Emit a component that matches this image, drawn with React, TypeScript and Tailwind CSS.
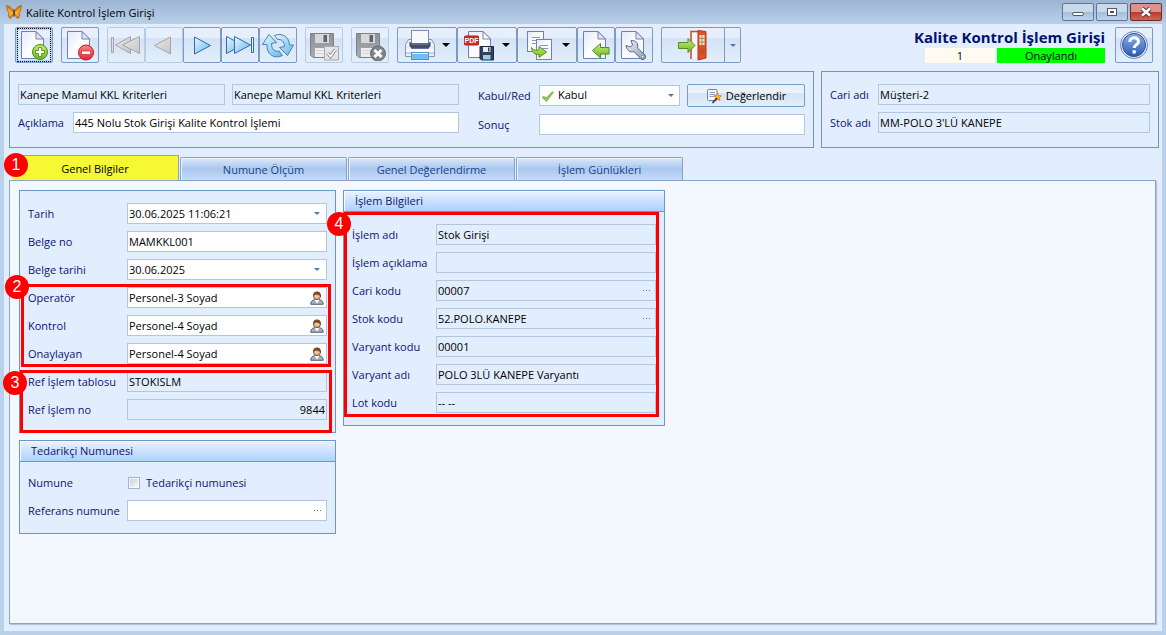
import type { ReactNode } from "react";

/* Toolbar drawings */

function PageShape() {
  return (
    <>
      <path d="M3.500 2.500H18L25.500 10V29.500H3.500Z" fill="url(#paper)" stroke="#7080b4" />
      <path d="M18 2.500V10H25.500Z" fill="#dfe6f8" stroke="#7080b4" />
    </>
  );
}

function Defs() {
  return (
    <svg width="0" height="0" className="absolute">
      <defs>
        <linearGradient id="paper" x1="0" y1="0" x2="1" y2="1">
          <stop offset="0" stopColor="#e3e9f8" />
          <stop offset="0.5" stopColor="#fdfdff" />
          <stop offset="1" stopColor="#eef1fb" />
        </linearGradient>
        <linearGradient id="green" x1="0" y1="0" x2="0" y2="1">
          <stop offset="0" stopColor="#c6ef6d" />
          <stop offset="1" stopColor="#6fb524" />
        </linearGradient>
        <linearGradient id="red" x1="0" y1="0" x2="0" y2="1">
          <stop offset="0" stopColor="#ff8585" />
          <stop offset="1" stopColor="#e8262d" />
        </linearGradient>
        <linearGradient id="blue" x1="0" y1="0" x2="1" y2="1">
          <stop offset="0" stopColor="#e8f8ff" />
          <stop offset="1" stopColor="#66b6ea" />
        </linearGradient>
        <linearGradient id="gray" x1="0" y1="0" x2="1" y2="1">
          <stop offset="0" stopColor="#ececec" />
          <stop offset="1" stopColor="#c4c4c4" />
        </linearGradient>
        <linearGradient id="floppy" x1="0" y1="0" x2="0" y2="1">
          <stop offset="0" stopColor="#8f9196" />
          <stop offset="1" stopColor="#a9abb0" />
        </linearGradient>
        <linearGradient id="help" x1="0" y1="0" x2="0" y2="1">
          <stop offset="0" stopColor="#8fb0ea" />
          <stop offset="1" stopColor="#2a5cb4" />
        </linearGradient>
        <linearGradient id="steel" x1="0" y1="0" x2="1" y2="1">
          <stop offset="0" stopColor="#eef1f7" />
          <stop offset="1" stopColor="#8f9ab0" />
        </linearGradient>
        <linearGradient id="wing" x1="0" y1="0" x2="0" y2="1">
          <stop offset="0" stopColor="#f08c10" />
          <stop offset="0.6" stopColor="#ffb52a" />
          <stop offset="1" stopColor="#d9730c" />
        </linearGradient>
      </defs>
    </svg>
  );
}

function Icon({ children }: { children: ReactNode }) {
  return (
    <svg viewBox="0 0 32 32" className="size-8 shrink-0" aria-hidden="true">
      {children}
    </svg>
  );
}

const NewIcon = () => (
  <Icon>
    <PageShape />
    <circle cx="22" cy="23" r="7.500" fill="url(#green)" stroke="#4a8a12" />
    <path d="M20.500 18.500h3v3h3v3h-3v3h-3v-3h-3v-3h3z" fill="#fff" stroke="#4a8a12" strokeWidth="0.800" />
  </Icon>
);

const DeleteIcon = () => (
  <Icon>
    <PageShape />
    <circle cx="22" cy="23.500" r="7.500" fill="url(#red)" stroke="#c4161c" />
    <rect x="17.500" y="22" width="9" height="3.500" fill="#fff" stroke="#b3161c" strokeWidth="0.600" />
  </Icon>
);

const FirstIcon = () => (
  <Icon>
    <path d="M1.500 8.500h2v15h-2z" fill="#ddd" stroke="#a3a5aa" />
    <path d="M20.500 7.500v17L5.500 16z" fill="url(#gray)" stroke="#a3a5aa" />
    <path d="M29.500 7.500v17L12.500 16z" fill="url(#gray)" stroke="#a3a5aa" />
  </Icon>
);

const PrevIcon = () => (
  <Icon>
    <path d="M22.500 8v17L6.500 16.500z" fill="url(#gray)" stroke="#a3a5aa" />
  </Icon>
);

const NextIcon = () => (
  <Icon>
    <path d="M8.500 8v17l16-8.500z" fill="url(#blue)" stroke="#2f68b3" />
  </Icon>
);

const LastIcon = () => (
  <Icon>
    <path d="M2.500 7.500v17l16-8.500z" fill="url(#blue)" stroke="#2f68b3" />
    <path d="M10.500 7.500v17l16-8.500z" fill="url(#blue)" stroke="#2f68b3" />
    <path d="M27.500 8.500h2v15h-2z" fill="#e8f8ff" stroke="#2f68b3" />
  </Icon>
);

const RefreshIcon = () => (
  <Icon>
    <path
      d="M12.500 6.500C20 3.500 27 7.500 27.500 16H31.500L25.500 26.500L17.500 18.500L22.500 17.500C22.500 12.500 19.500 10 15.500 10.500Z"
      fill="url(#blue)"
      stroke="#4383b5"
    />
    <path
      d="M20.500 26.500C12 30.500 4.500 25.500 5 15.500H0.500L7 5.500L14.500 13.500L9.500 14.500C9.500 20.500 13 23 17 22Z"
      fill="url(#blue)"
      stroke="#4383b5"
    />
  </Icon>
);

function GrayFloppy() {
  return (
    <>
      <path d="M2.500 4.500H25.500V28.500H5L2.500 26Z" fill="url(#floppy)" stroke="#7d8085" />
      <rect x="7" y="5" width="14" height="9" fill="#d5d7da" />
      <rect x="15.500" y="6" width="3.500" height="7" fill="#5f6267" />
      <rect x="7" y="19" width="14" height="9" fill="#eceded" />
      <path d="M8 21.500h12M8 24.500h12" stroke="#d4d6d8" />
    </>
  );
}

const SaveIcon = () => (
  <Icon>
    <GrayFloppy />
    <rect x="16.500" y="17.500" width="14" height="13.500" fill="#e4e4e5" stroke="#a8aaad" />
    <path d="M19.500 24l3 3.500 5-7" fill="none" stroke="#8d9095" strokeWidth="3.400" />
    <path d="M19.500 24l3 3.500 5-7" fill="none" stroke="#fff" strokeWidth="1.400" />
  </Icon>
);

const SaveCancelIcon = () => (
  <Icon>
    <GrayFloppy />
    <circle cx="24" cy="24.500" r="7.500" fill="#808388" stroke="#66696e" />
    <path d="M20.500 21l7 7M27.500 21l-7 7" stroke="#fff" strokeWidth="3" />
  </Icon>
);

const PrintIcon = () => (
  <Icon>
    <path d="M4.500 10.500h3v9h17v-9h3l3 5V27.500H1.500V15.500z" fill="#e9ecf6" stroke="#8a93b8" />
    <rect x="7.500" y="1.500" width="17" height="15" fill="#f6f8fe" stroke="#7e88b0" />
    <path d="M5.500 12.500l2 1.500h17l2-1.500v4.500l-2 2.500h-17l-2-2.500z" fill="#464d68" />
    <path d="M7.500 15h17" stroke="#7c86a6" />
    <rect x="2" y="20" width="28" height="3" fill="#f8f9fd" />
    <rect x="2" y="23" width="28" height="2" fill="#c9d0e4" />
    <rect x="7.500" y="23.500" width="17" height="7" fill="#74bdf3" stroke="#5f8fc4" />
    <path d="M8 24.500h16" stroke="#e4f3ff" />
  </Icon>
);

const PdfIcon = () => (
  <Icon>
    <path d="M4.500 2.500H19L26.500 10V28.500H4.500Z" fill="url(#paper)" stroke="#7080b4" />
    <path d="M19 2.500V10H26.500Z" fill="#fff" stroke="#7080b4" />
    <rect x="0.500" y="7" width="14" height="9" rx="1" fill="#d9292c" stroke="#ad1b1e" />
    <text x="7.500" y="14" textAnchor="middle" fontSize="7" fontWeight="700" fill="#fff" fontFamily="Liberation Sans">PDF</text>
    <path d="M16 17.500H29.500V31H17.500L16 29.500Z" fill="#30405f" stroke="#1c2a47" />
    <rect x="19" y="18" width="7.500" height="5" fill="#e8edf7" />
    <rect x="24" y="18.500" width="1.500" height="4" fill="#30405f" />
    <rect x="19" y="26" width="7.500" height="4.500" fill="#9cc9ee" />
  </Icon>
);

const CopyIcon = () => (
  <Icon>
    <rect x="3.500" y="2.500" width="16" height="20" fill="url(#paper)" stroke="#7080b4" />
    <path d="M8 8.500h8M8 11.500h8M8 14.500h6" stroke="#7e96cc" />
    <rect x="12.500" y="10.500" width="15" height="20" fill="url(#paper)" stroke="#7080b4" />
    <path d="M16 16.500h8M17 19.500h7" stroke="#7e96cc" />
    <path
      d="M7.500 18.500C9.500 21.500 12 21.500 15 21V17.500L22.500 23L15 28.500V25.500C11 26 8 23.500 7.500 18.500Z"
      fill="url(#green)"
      stroke="#5a921a"
    />
  </Icon>
);

const ImportIcon = () => (
  <Icon>
    <PageShape />
    <path d="M12.500 21.500l8-7v4H29v6.500h-8.500v4z" fill="url(#green)" stroke="#4f8d2b" />
  </Icon>
);

const ToolsIcon = () => (
  <Icon>
    <PageShape />
    <path
      d="M8 16.500l4.500 1.500 2-2-1.500-4.500c5-.5 8 3.500 6.500 7.500l7.500 7c2 3-1.500 6-4 4l-7-7.500c-4 1.500-7.500-1.500-8-6z"
      fill="url(#steel)"
      stroke="#5c6784"
    />
    <circle cx="24.500" cy="27.500" r="1.200" fill="#fff" stroke="#5c6784" strokeWidth="0.600" />
  </Icon>
);

const ExitIcon = () => (
  <Icon>
    <path d="M14 30V2.500H22" fill="none" stroke="#d0492a" strokeWidth="1.500" />
    <path d="M15 4H21V29L15 30Z" fill="#f3f6fc" />
    <path d="M21 1.500L29 2.500V29L21 31Z" fill="#dd5426" stroke="#b23a14" />
    <path d="M22.500 6h5v10h-5z" fill="#f4e8d2" />
    <path d="M25 6v10M22.500 9.500h5M22.500 13h5" stroke="#a38660" />
    <path d="M22.500 19.500h5v6h-5z" fill="#cf4a1e" />
    <path d="M1.500 13.500h9.500v-4l7 7-7 7v-4H1.500z" fill="url(#green)" stroke="#4f8d2b" />
  </Icon>
);

const HelpIcon = () => (
  <Icon>
    <circle cx="16" cy="16" r="13.500" fill="#e9eefa" stroke="#6d83b8" />
    <circle cx="16" cy="16" r="11.500" fill="url(#help)" stroke="#2a4f9e" />
    <path d="M11.800 13c0-5.500 8.700-5.500 8.700-.5 0 3.300-4.300 3.300-4.300 6.500" fill="none" stroke="#fff" strokeWidth="3" />
    <circle cx="16.200" cy="22.800" r="1.900" fill="#fff" />
  </Icon>
);

const Butterfly = () => (
  <svg viewBox="0 0 16 16" className="size-4" aria-hidden="true">
    <path d="M7.500 7.500C6.500 4.500 4 2 .6 1.500c.2 3.500 1 6 2.400 7C1.800 10 2.300 13 4.200 14.500 6 13.500 7 11 7.500 9z" fill="url(#wing)" stroke="#9a5208" strokeWidth="0.700" />
    <path d="M8.500 7.500C9.500 4.500 12 2 15.400 1.500c-.2 3.500-1 6-2.400 7 1.200 1.500.7 4.500-1.200 6C10 13.500 9 11 8.500 9z" fill="url(#wing)" stroke="#9a5208" strokeWidth="0.700" />
    <path d="M8 5.500v7" stroke="#4b2606" strokeWidth="1.200" />
    <path d="M2 3l4.500 4M14 3L9.500 7" stroke="#8a4608" strokeWidth="0.600" />
  </svg>
);

const PersonIcon = () => (
  <svg viewBox="0 0 14 14" className="size-3.5" aria-hidden="true">
    <path d="M.8 13.300c0-3.500 2-4.800 6.200-4.800s6.200 1.300 6.200 4.800z" fill="#9fb0bf" stroke="#46525f" strokeWidth="0.900" />
    <path d="M4.500 8.500l2.500 4.300 2.500-4.300z" fill="#fff" />
    <circle cx="7" cy="5" r="3.500" fill="#f0c096" stroke="#5e3a1c" strokeWidth="0.900" />
    <path d="M3.300 5.500C2.800 1.800 5 .6 7 .6s4.200 1.200 3.700 4.900C9.500 4.500 8 3.500 6.500 3.500 5 3.500 4 4.500 3.300 5.500z" fill="#7a4a24" />
  </svg>
);

const EvaluateIcon = () => (
  <svg viewBox="0 0 16 16" className="size-4" aria-hidden="true">
    <rect x="1.500" y="1.500" width="9.500" height="11" rx="1" fill="#f5f7fd" stroke="#6c7fb5" />
    <path d="M3.500 4.500h5.500M3.500 6.500h5.500M3.500 8.500h4" stroke="#8a9acb" />
    <path d="M11.500 5l1.200 2.500 2.800.3-2 2 .5 2.700-2.500-1.300L9 12.500l.5-2.700-2-2 2.800-.3z" fill="#ffb52e" stroke="#d0700c" strokeWidth="0.700" />
    <path d="M6.500 15l4.500-5" stroke="#3b3f4b" strokeWidth="1.800" />
  </svg>
);

const CheckIcon = () => (
  <svg viewBox="0 0 14 14" className="size-3.5" aria-hidden="true">
    <path d="M1 8.500l2-1.500L5 9l6.500-6.500 1 1L5.500 12.500z" fill="#8fc651" stroke="#7fae4f" strokeWidth="0.700" />
  </svg>
);

const Caret = ({ className }: { className: string }) => (
  <svg viewBox="0 0 8 4" className={className} aria-hidden="true">
    <path d="M0 0h8L4 4z" fill="currentColor" />
  </svg>
);

const DropCaret = () => <Caret className="h-[3px] w-1.5" />;

const Dots = () => (
  <svg viewBox="0 0 9 1" className="h-px w-[9px]" aria-hidden="true">
    <path d="M1 0h1v1H1zM4 0h1v1H4zM7 0h1v1H7z" fill="currentColor" />
  </svg>
);

/* Building blocks */

const TOOL =
  "flex h-9 items-center justify-center rounded-xs border bg-linear-to-b from-[#e6effb] from-30% via-[#d3e2f5] via-30% to-[#e2eefb]";

function ToolButton({
  label,
  icon,
  disabled = false,
  focused = false,
  menu = false,
}: {
  label: string;
  icon: ReactNode;
  disabled?: boolean;
  focused?: boolean;
  menu?: boolean;
}) {
  return (
    <button
      type="button"
      aria-label={label}
      disabled={disabled}
      className={`${TOOL} ${disabled ? "border-[#b9cbe1]" : "border-[#7b9ac4]"} ${menu ? "w-15 gap-1.5" : "w-[38px]"} ${
        focused ? "shadow-[inset_0_0_0_2px_#b5d3f3]" : ""
      }`}
    >
      {focused ? <span className="-my-px border border-dotted border-black">{icon}</span> : icon}
      {menu && <Caret className="h-1 w-2 text-black" />}
    </button>
  );
}

const LABEL = "shrink-0 whitespace-nowrap text-[#0a1670]";
const INPUT = "h-[21px] w-full min-w-0 border border-[#b3c6e0] px-px pb-px text-black outline-none";

function Field({
  id,
  label,
  value = "",
  labelWidth,
  readOnly = false,
  alignRight = false,
  adornment,
}: {
  id: string;
  label: string;
  value?: string;
  labelWidth: string;
  readOnly?: boolean;
  alignRight?: boolean;
  adornment?: ReactNode;
}) {
  return (
    <div className="flex items-center">
      <label htmlFor={id} className={`${LABEL} ${labelWidth}`}>
        {label}
      </label>
      <div className="relative flex min-w-0 flex-1">
        <input
          id={id}
          defaultValue={value}
          readOnly={readOnly}
          className={`${INPUT} ${readOnly ? "bg-[#e2edfe]" : "bg-white"} ${alignRight ? "text-right" : ""}`}
        />
        {adornment && (
          <span className="absolute inset-y-0 right-0 flex w-5 items-center justify-center text-[#4a78b8]">{adornment}</span>
        )}
      </div>
    </div>
  );
}

function Group({ title, children }: { title?: string; children: ReactNode }) {
  return (
    <section className="border border-[#6c95cc] bg-[#e2edfe]">
      {title && (
        <h2 className="h-[21px] border-b border-[#6c95cc] bg-linear-to-b from-[#e9f3ff] to-[#afd0fd] px-[11px] leading-5 text-[#0a1670] shadow-[inset_1px_1px_0_#f7fbff]">
          {title}
        </h2>
      )}
      {children}
    </section>
  );
}

function Marker({ n, className }: { n: number; className: string }) {
  return (
    <span
      className={`absolute z-10 flex size-6 items-center justify-center rounded-full bg-[#ff0000] font-['Liberation_Sans',sans-serif] text-base text-white ${className}`}
    >
      {n}
    </span>
  );
}

const TABS = ["Genel Bilgiler", "Numune Ölçüm", "Genel Değerlendirme", "İşlem Günlükleri"];

const WINDOW_BUTTON =
  "flex h-[18px] w-8 items-center justify-center rounded-xs border border-[#5f7795] bg-linear-to-b from-[#c9d9ea] from-50% via-[#a5bdd8] via-50% to-[#bdd3ea]";

export default function App() {
  return (
    <div className="flex min-h-screen flex-col bg-[#b9d1ea] font-['Open_Sans','Noto_Sans',sans-serif] text-[11px] leading-4">
      <Defs />

      {/* Title bar */}
      <header className="flex h-6 items-center bg-linear-to-b from-[#9cb5d3] to-[#b9d0e9] pr-1 pl-1.5 text-black">
        <Butterfly />
        <span className="mt-0.5 ml-1 flex-1">Kalite Kontrol İşlem Girişi</span>
        <div className="flex gap-0.5">
          <button type="button" aria-label="Simge durumuna küçült" className={WINDOW_BUTTON}>
            <span className="mt-1 h-1 w-3 rounded-xs border border-[#4d5a6e] bg-white" />
          </button>
          <button type="button" aria-label="Ekranı kapla" className={WINDOW_BUTTON}>
            <span className="flex h-2 w-2.5 items-center justify-center border border-[#4d5a6e] bg-white">
              <span className="h-0.5 w-1 bg-[#4d5a6e]" />
            </span>
          </button>
          <button
            type="button"
            aria-label="Kapat"
            className="flex h-[18px] w-8 items-center justify-center rounded-xs border border-[#6b2a2c] bg-linear-to-b from-[#dc9288] from-50% via-[#b8382a] via-50% to-[#d0644e]"
          >
            <svg viewBox="0 0 12 10" className="h-2.5 w-3">
              <path d="M2 1.500l8 7M10 1.500l-8 7" stroke="#5c3038" strokeWidth="4.500" />
              <path d="M2 1.500l8 7M10 1.500l-8 7" stroke="#fff" strokeWidth="2.600" />
            </svg>
          </button>
        </div>
      </header>

      <main className="mx-1 mb-1 flex flex-1 flex-col bg-[#e2edfe] pb-[7px]">
        {/* Toolbar */}
        <div className="flex items-start justify-between pt-[3px] pr-[9px] pl-[11px]">
          <div className="flex gap-2">
            <ToolButton label="Yeni" icon={<NewIcon />} focused />
            <ToolButton label="Sil" icon={<DeleteIcon />} />
            <div className="flex">
              <ToolButton label="İlk" icon={<FirstIcon />} disabled />
              <ToolButton label="Önceki" icon={<PrevIcon />} disabled />
              <ToolButton label="Sonraki" icon={<NextIcon />} />
              <ToolButton label="Son" icon={<LastIcon />} />
              <ToolButton label="Yenile" icon={<RefreshIcon />} />
            </div>
            <ToolButton label="Kaydet" icon={<SaveIcon />} disabled />
            <ToolButton label="Vazgeç" icon={<SaveCancelIcon />} disabled />
            <div className="flex">
              <ToolButton label="Yazdır" icon={<PrintIcon />} menu />
              <ToolButton label="PDF" icon={<PdfIcon />} menu />
              <ToolButton label="Kopyala" icon={<CopyIcon />} menu />
              <ToolButton label="Aktar" icon={<ImportIcon />} />
              <ToolButton label="Araçlar" icon={<ToolsIcon />} />
            </div>
            <div className="flex">
              <button type="button" aria-label="Çıkış" className={`${TOOL} w-16 rounded-r-none border-[#7b9ac4]`}>
                <ExitIcon />
              </button>
              <button
                type="button"
                aria-label="Çıkış seçenekleri"
                className={`${TOOL} w-4 rounded-l-none border-l-0 border-[#7b9ac4] text-[#4a78b8]`}
              >
                <DropCaret />
              </button>
            </div>
          </div>

          <div className="flex gap-2.5">
            <div>
              <h1 className="text-right text-[15px] leading-[21px] font-bold text-[#00126e]">Kalite Kontrol İşlem Girişi</h1>
              <div className="flex justify-end gap-0.5 text-center leading-[15px] text-black">
                <span className="w-[70px] bg-[#fffbf0]">1</span>
                <span className="w-27 bg-[#00ff00]">Onaylandı</span>
              </div>
            </div>
            <ToolButton label="Yardım" icon={<HelpIcon />} />
          </div>
        </div>

        {/* Record summary */}
        <div className="mt-2 flex gap-[7px] pr-[3px] pl-[5px]">
          <section className="flex h-[77px] flex-1 border border-[#6c95cc] px-2 pt-3">
            <div className="w-[441px] space-y-[7px]">
              <div className="flex gap-[7px]">
                <input
                  aria-label="Kriter kodu"
                  readOnly
                  defaultValue="Kanepe Mamul KKL Kriterleri"
                  className={`${INPUT} max-w-[207px] bg-[#e2edfe]`}
                />
                <input
                  aria-label="Kriter adı"
                  readOnly
                  defaultValue="Kanepe Mamul KKL Kriterleri"
                  className={`${INPUT} bg-[#e2edfe]`}
                />
              </div>
              <Field id="aciklama" label="Açıklama" labelWidth="w-[55px]" value="445 Nolu Stok Girişi Kalite Kontrol İşlemi" />
            </div>
            <div className="ml-[19px] flex-1 space-y-[7px]">
              <div className="flex items-center">
                <label htmlFor="kabul" className={`${LABEL} w-[61px]`}>
                  Kabul/Red
                </label>
                <div className="relative flex flex-1">
                  <select id="kabul" className={`${INPUT} appearance-none bg-white pl-[18px]`}>
                    <option>Kabul</option>
                    <option>Red</option>
                  </select>
                  <span className="pointer-events-none absolute inset-y-0 left-0.5 flex items-center">
                    <CheckIcon />
                  </span>
                  <span className="pointer-events-none absolute inset-y-0 right-1.5 flex items-center text-[#4a78b8]">
                    <DropCaret />
                  </span>
                </div>
                <button
                  type="button"
                  className="ml-[7px] flex h-[23px] w-[118px] items-center justify-center gap-1 rounded-xs border border-[#7b9ac4] bg-linear-to-b from-[#e9f1fb] from-40% via-[#d6e4f5] via-40% to-[#e2eefb] text-black"
                >
                  <EvaluateIcon />
                  Değerlendir
                </button>
              </div>
              <Field id="sonuc" label="Sonuç" labelWidth="w-[61px]" />
            </div>
          </section>
          <section className="h-[77px] w-[338px] space-y-[7px] border border-[#6c95cc] px-2 pt-3">
            <Field id="cari-adi" label="Cari adı" labelWidth="w-12" value="Müşteri-2" readOnly />
            <Field id="stok-adi" label="Stok adı" labelWidth="w-12" value="MM-POLO 3'LÜ KANEPE" readOnly />
          </section>
        </div>

        {/* Tabs */}
        <nav role="tablist" className="relative mt-[7px] ml-2 flex items-end gap-px">
          {TABS.map((tab, i) => (
            <button
              key={tab}
              type="button"
              role="tab"
              aria-selected={i === 0}
              className={
                i === 0
                  ? "h-[25px] w-[167px] border-t border-r border-[#8aa3cc] bg-[#f5f832] pt-0.5 text-black"
                  : "h-[23px] w-[167px] rounded-t-xs border border-b-0 border-[#8aa3cc] bg-linear-to-b from-[#dde8f8] via-[#a9c7ee] via-50% to-[#c6dbf7] pt-0.5 text-[#1d4190] shadow-[inset_1px_1px_0_#eef4fd]"
              }
            >
              {tab}
            </button>
          ))}
          <Marker n={1} className="-top-0.5 -left-2" />
        </nav>

        {/* Tab page */}
        <div
          role="tabpanel"
          className="mr-1.5 ml-[5px] flex flex-1 items-start gap-[7px] border border-[#8aa3cc] bg-[#f3f7fe] p-[9px] shadow-[1px_1px_1px_#b4c4de]"
        >
          <div className="w-[317px] space-y-[7px]">
            <div className="relative">
              <Group>
                <div className="space-y-[7px] px-2 py-3">
                  <Field id="tarih" label="Tarih" labelWidth="w-[99px]" value="30.06.2025 11:06:21" adornment={<DropCaret />} />
                  <Field id="belge-no" label="Belge no" labelWidth="w-[99px]" value="MAMKKL001" />
                  <Field id="belge-tarihi" label="Belge tarihi" labelWidth="w-[99px]" value="30.06.2025" adornment={<DropCaret />} />
                  <Field id="operator" label="Operatör" labelWidth="w-[99px]" value="Personel-3 Soyad" adornment={<PersonIcon />} />
                  <Field id="kontrol" label="Kontrol" labelWidth="w-[99px]" value="Personel-4 Soyad" adornment={<PersonIcon />} />
                  <Field id="onaylayan" label="Onaylayan" labelWidth="w-[99px]" value="Personel-4 Soyad" adornment={<PersonIcon />} />
                  <Field id="ref-tablo" label="Ref İşlem tablosu" labelWidth="w-[99px]" value="STOKISLM" readOnly />
                  <Field id="ref-no" label="Ref İşlem no" labelWidth="w-[99px]" value="9844" readOnly alignRight />
                </div>
              </Group>
              <div className="pointer-events-none absolute top-[94px] right-[5px] left-0.5 h-[83px] border-3 border-[#ff0000]" />
              <Marker n={2} className="top-[85px] -left-3.5" />
              <div className="pointer-events-none absolute top-[180px] right-1 left-px h-[63px] border-3 border-[#ff0000]" />
              <Marker n={3} className="top-[181px] -left-4" />
            </div>

            <Group title="Tedarikçi Numunesi">
              <div className="space-y-[7px] px-2 pt-[11px] pb-3">
                <div className="flex h-5 items-center">
                  <span className={`${LABEL} w-[100px]`}>Numune</span>
                  <input
                    id="tedarikci-numunesi"
                    type="checkbox"
                    className="size-3 appearance-none border border-[#9fb5d2] bg-linear-to-br from-[#c6cbd2] to-white shadow-[inset_0_0_0_1px_#f6f9fd]"
                  />
                  <label htmlFor="tedarikci-numunesi" className={`${LABEL} ml-1.5`}>
                    Tedarikçi numunesi
                  </label>
                </div>
                <Field id="ref-numune" label="Referans numune" labelWidth="w-[99px]" adornment={<Dots />} />
              </div>
            </Group>
          </div>

          <div className="relative w-[322px]">
            <Group title="İşlem Bilgileri">
              <div className="space-y-[7px] px-2 py-3">
                <Field id="islem-adi" label="İşlem adı" labelWidth="w-[84px]" value="Stok Girişi" readOnly />
                <Field id="islem-aciklama" label="İşlem açıklama" labelWidth="w-[84px]" readOnly />
                <Field id="cari-kodu" label="Cari kodu" labelWidth="w-[84px]" value="00007" readOnly adornment={<Dots />} />
                <Field id="stok-kodu" label="Stok kodu" labelWidth="w-[84px]" value="52.POLO.KANEPE" readOnly adornment={<Dots />} />
                <Field id="varyant-kodu" label="Varyant kodu" labelWidth="w-[84px]" value="00001" readOnly />
                <Field id="varyant-adi" label="Varyant adı" labelWidth="w-[84px]" value="POLO 3LÜ KANEPE Varyantı" readOnly />
                <Field id="lot-kodu" label="Lot kodu" labelWidth="w-[84px]" value="-- --" readOnly />
              </div>
            </Group>
            <div className="pointer-events-none absolute top-[22px] right-1.5 left-px h-[205px] border-3 border-[#ff0000]" />
            <Marker n={4} className="top-[22px] -left-4" />
          </div>
        </div>
      </main>
    </div>
  );
}
